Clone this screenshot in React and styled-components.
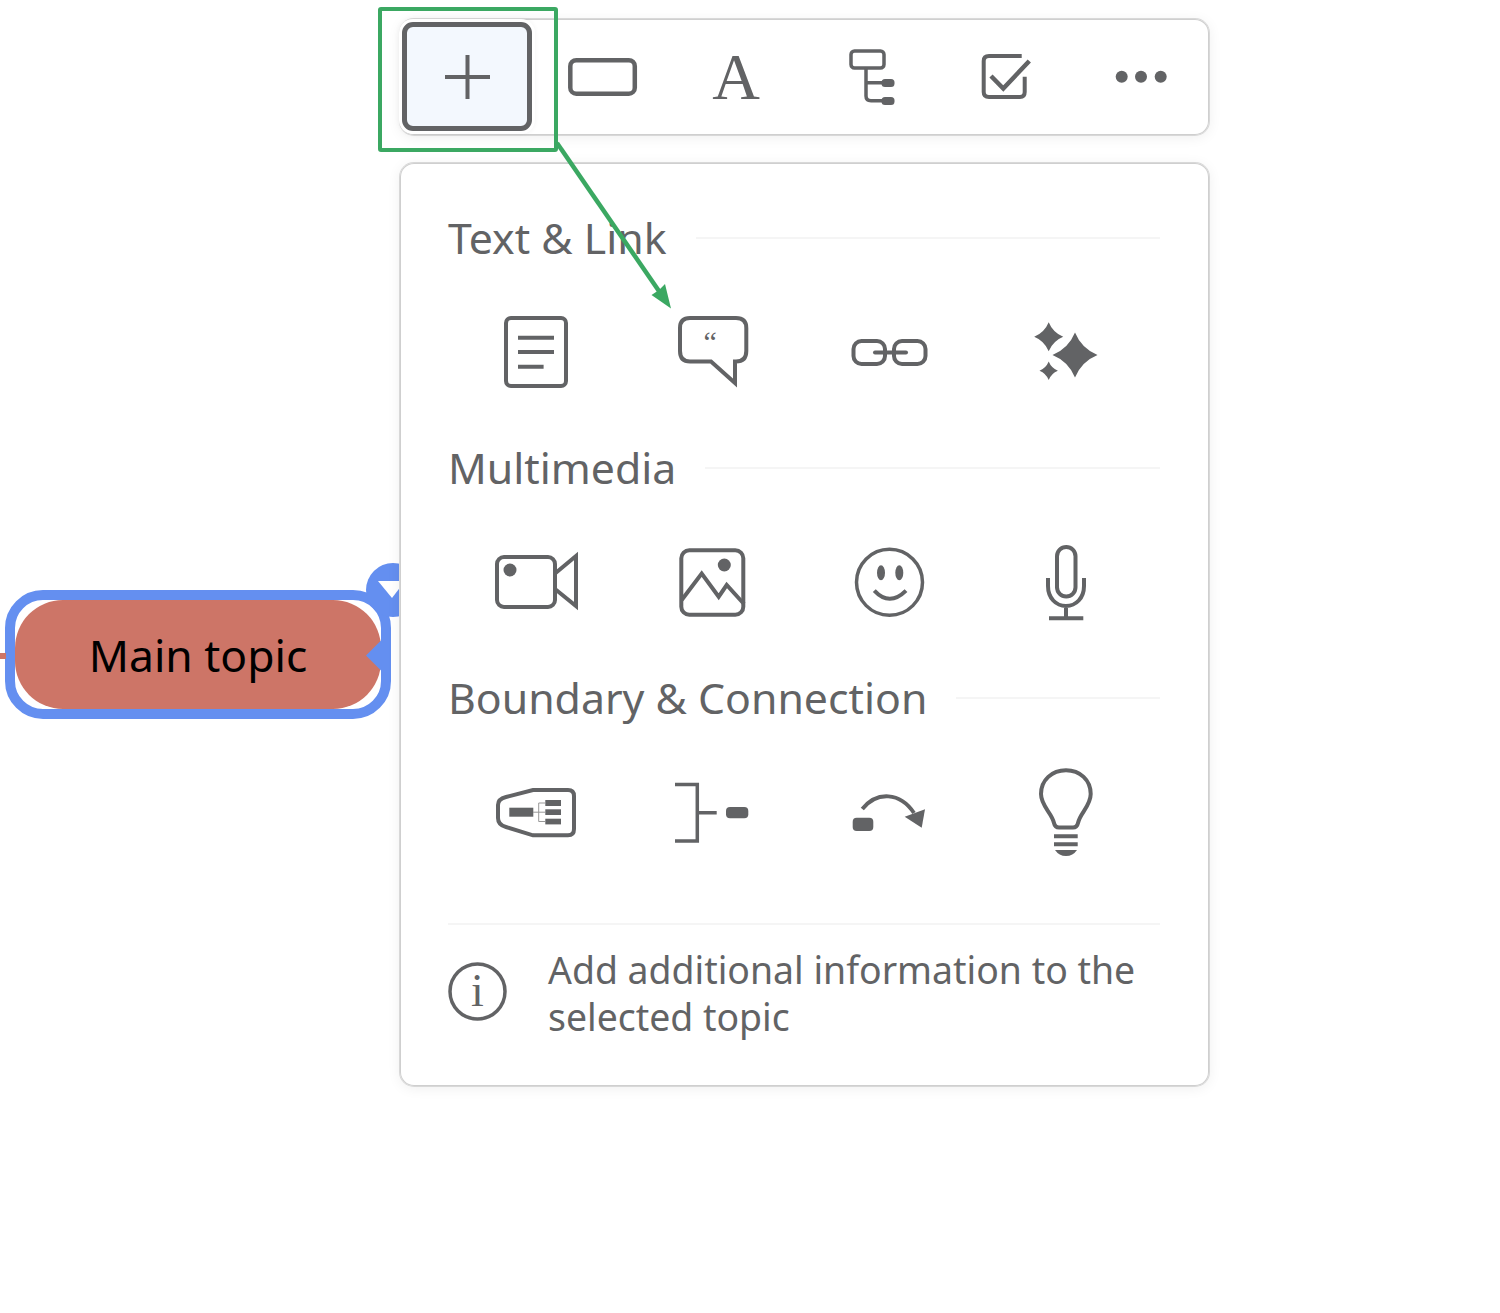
import React from "react";
import styled, { createGlobalStyle } from "styled-components";

const INK = "#626365";
const BLUE = "#648ff0";
const GREEN = "#3ba862";
const TOPIC = "#cd7567";

const GlobalStyle = createGlobalStyle`
  html, body {
    margin: 0;
    padding: 0;
    background: #fff;
  }
  body {
    font-family: "Noto Sans", "Open Sans", sans-serif;
    color: ${INK};
  }
`;

const Page = styled.div`
  position: relative;
  display: flex;
  width: 1500px;
  height: 1313px;
  padding-top: 19px;
  box-sizing: border-box;
  overflow: hidden;
`;

const CanvasSide = styled.div`
  width: 400px;
  padding: 571px 0 0 5px;
  box-sizing: border-box;
`;

const Topic = styled.div`
  position: relative;
  width: 386px;
  height: 129px;
  box-sizing: border-box;
  border: 10px solid ${BLUE};
  border-radius: 38px;
  background: #fff;
`;

const TopicFill = styled.div`
  display: flex;
  align-items: center;
  justify-content: center;
  height: 100%;
  border-radius: 48px;
  background: ${TOPIC};
  color: #000;
  font-size: 44.4px;
`;

const Connector = styled.span`
  position: absolute;
  left: -15px;
  top: 53px;
  width: 6px;
  height: 6px;
  background: ${TOPIC};
`;

const Handle = styled.svg`
  position: absolute;
  left: -15px;
  top: -38px;
  width: 400px;
  height: 120px;
  overflow: visible;
`;

const Panels = styled.div`
  position: relative;
  z-index: 1;
  display: flex;
  flex-direction: column;
  gap: 28px;
  width: 809px;
`;

const Toolbar = styled.div`
  display: flex;
  height: 116px;
  border-radius: 14px;
  background: #fff;
  box-shadow: inset 0 0 0 1px #cfcfcf, 0 0 0 1px #d8d8d8, 0 2px 14px rgba(0, 0, 0, 0.07);
`;

const ToolCell = styled.div`
  display: flex;
  flex: 0 0 135px;
  align-items: center;
  justify-content: center;
`;

const ActiveTool = styled(ToolCell)`
  width: 130px;
  flex: 0 0 130px;
  align-self: flex-start;
  height: 109px;
  margin: 3px 3px 0 2px;
  box-sizing: border-box;
  border: 5px solid ${INK};
  border-radius: 11px;
  background: #f3f8fe;
  box-shadow: 0 0 0 3px #fff, 0 0 5px 3px rgba(0, 0, 0, 0.05);
`;

const LetterTool = styled.span`
  padding-right: 3px;
  font-family: "Liberation Serif", serif;
  font-size: 66px;
  line-height: 1;
  color: ${INK};
`;

const Popup = styled.section`
  height: 923px;
  box-sizing: border-box;
  padding: 46px 49px 0 48px;
  border-radius: 14px;
  background: #fff;
  box-shadow: inset 0 0 0 1px #cfcfcf, 0 0 0 1px #d8d8d8, 0 2px 14px rgba(0, 0, 0, 0.07);
`;

const Section = styled.div`
  margin-bottom: 37px;
`;

const Heading = styled.div`
  display: flex;
  align-items: center;
  gap: 29px;
  height: 60px;
  margin-bottom: 33px;
`;

const HeadingText = styled.h3`
  margin: -2px 0 0;
  font-size: 42.8px;
  font-weight: 400;
  line-height: 60px;
  white-space: nowrap;
  color: ${INK};
`;

const Rule = styled.div`
  flex: 1;
  height: 2px;
  margin-top: -3px;
  background: #f5f5f5;
`;

const IconRow = styled.div`
  display: grid;
  grid-template-columns: repeat(4, 176px);
  column-gap: 1px;
  justify-items: center;
`;

const Icon = styled.svg`
  display: block;
  width: 100px;
  height: 100px;
  fill: none;
  stroke: ${INK};
  stroke-width: 4;
  overflow: visible;

  .solid {
    fill: ${INK};
    stroke: none;
  }
  text {
    fill: ${INK};
    stroke: none;
    font-family: "Liberation Serif", serif;
  }
`;

const Footer = styled.div`
  display: flex;
  gap: 41px;
  margin: 61px 0 0;
  padding-top: 21px;
  border-top: 2px solid #f5f5f5;
`;

const InfoIcon = styled.svg`
  flex: 0 0 59px;
  width: 59px;
  height: 59px;
  margin-top: 16px;
  fill: none;
  stroke: ${INK};
  stroke-width: 3.5;

  text {
    fill: ${INK};
    stroke: none;
    font-family: "Liberation Serif", serif;
    font-size: 46px;
  }
`;

const Hint = styled.p`
  margin: 0;
  font-size: 37.4px;
  line-height: 47px;
  color: ${INK};
`;

const Highlight = styled.div`
  position: absolute;
  z-index: 2;
  left: 378px;
  top: 7px;
  width: 180px;
  height: 145px;
  box-sizing: border-box;
  border: 4px solid ${GREEN};
  border-radius: 3px;
`;

const Arrow = styled.svg`
  position: absolute;
  z-index: 2;
  left: 0;
  top: 0;
  width: 1500px;
  height: 1313px;
  pointer-events: none;
`;

const star = (cx, cy, r) => {
  const k = r * 0.29;
  return `M${cx} ${cy - r}Q${cx + k} ${cy - k} ${cx + r} ${cy}Q${cx + k} ${cy + k} ${cx} ${cy + r}Q${cx - k} ${cy + k} ${cx - r} ${cy}Q${cx - k} ${cy - k} ${cx} ${cy - r}Z`;
};

// icons are drawn in page coordinates, the viewBox is centred on the cell
const Glyph = ({ cx, cy, children }) => (
  <Icon viewBox={`${cx - 50} ${cy - 50} 100 100`}>{children}</Icon>
);

const toolX = (i) => 468 + 135 * i;
const gridX = (i) => 536 + 177 * i;

const App = () => {
  return (
    <Page>
      <GlobalStyle />
      <CanvasSide>
        <Topic>
          <Connector />
          <TopicFill>Main topic</TopicFill>
          <Handle viewBox="0 562 400 120">
            <path fill={BLUE} d="M366 655.5L382 639.5V671.5Z" />
            <circle cx="393" cy="590" r="27" fill={BLUE} />
            <path fill="#fff" d="M378 581H405L392 598Z" />
          </Handle>
        </Topic>
      </CanvasSide>

      <Panels>
        <Toolbar>
          <ActiveTool>
            <Glyph cx={467} cy={77}>
              <path d="M445 77H490M467.5 55V99" />
            </Glyph>
          </ActiveTool>
          <ToolCell>
            <Glyph cx={toolX(1)} cy={77}>
              <rect x="570.3" y="60.2" width="64.5" height="33.5" rx="6" strokeWidth="4.5" />
            </Glyph>
          </ToolCell>
          <ToolCell>
            <LetterTool>A</LetterTool>
          </ToolCell>
          <ToolCell>
            <Glyph cx={toolX(3)} cy={77}>
              <rect x="851" y="51" width="33" height="17" rx="3.5" strokeWidth="3.5" />
              <path strokeWidth="3.5" d="M866 68V96Q866 100.7 871 100.7H884M866 82.7H884" />
              <rect className="solid" x="881.5" y="79" width="13" height="8" rx="3.5" />
              <rect className="solid" x="881.5" y="97" width="13" height="8" rx="3.5" />
            </Glyph>
          </ToolCell>
          <ToolCell>
            <Glyph cx={toolX(4)} cy={77}>
              <path d="M1021.7 56H989Q983.7 56 983.7 61V92Q983.7 97 989 97H1020Q1024.7 97 1024.7 92V76.7" />
              <path strokeWidth="4.5" d="M991 76L1003.3 88.5L1029.3 61" />
            </Glyph>
          </ToolCell>
          <ToolCell>
            <Glyph cx={toolX(5)} cy={77}>
              <circle className="solid" cx="1121.7" cy="76.7" r="6" />
              <circle className="solid" cx="1141" cy="76.7" r="6" />
              <circle className="solid" cx="1160.7" cy="76.7" r="6" />
            </Glyph>
          </ToolCell>
        </Toolbar>

        <Popup>
          <Section>
            <Heading>
              <HeadingText>Text &amp; Link</HeadingText>
              <Rule />
            </Heading>
            <IconRow>
              <Glyph cx={gridX(0)} cy={352}>
                <rect x="506" y="318" width="60" height="68" rx="5" />
                <path d="M518 337.7H554M518 352H554M518 366.7H543.6" />
              </Glyph>
              <Glyph cx={gridX(1)} cy={352}>
                <path d="M690 318H736Q746.3 318 746.3 328V351Q746.3 361.5 736 361.5H735V383L711 361.5H690Q680 361.5 680 351V328Q680 318 690 318Z" />
                <text x="703.5" y="352" fontSize="30">“</text>
              </Glyph>
              <Glyph cx={gridX(2)} cy={352}>
                <rect x="853.5" y="341" width="31.5" height="23" rx="8" />
                <rect x="894" y="341" width="31.5" height="23" rx="8" />
                <path strokeLinecap="round" d="M875 352.5H906" />
              </Glyph>
              <Glyph cx={gridX(3)} cy={352}>
                <path className="solid" d={star(1075, 355, 22.5)} />
                <path className="solid" d={star(1048.7, 336.8, 14.5)} />
                <path className="solid" d={star(1048.7, 370.8, 9.2)} />
              </Glyph>
            </IconRow>
          </Section>

          <Section>
            <Heading>
              <HeadingText>Multimedia</HeadingText>
              <Rule />
            </Heading>
            <IconRow>
              <Glyph cx={gridX(0)} cy={582}>
                <rect x="497" y="557" width="58" height="50" rx="7" />
                <circle className="solid" cx="510" cy="570" r="6.5" />
                <path d="M555 573.5L576 556V606L555 589" />
              </Glyph>
              <Glyph cx={gridX(1)} cy={582}>
                <rect x="681.3" y="550.3" width="62" height="64.5" rx="8" />
                <circle className="solid" cx="724.3" cy="565" r="6.5" />
                <path d="M681.7 600L701.7 573.5L718.7 596.7L726.7 585L744 604" />
              </Glyph>
              <Glyph cx={gridX(2)} cy={582}>
                <circle cx="889.5" cy="582.3" r="33" strokeWidth="3.5" />
                <ellipse className="solid" cx="881" cy="572.7" rx="4" ry="7.5" />
                <ellipse className="solid" cx="899.3" cy="572.7" rx="4" ry="7.5" />
                <path d="M874.3 590.7Q889.5 607 906 590.7" />
              </Glyph>
              <Glyph cx={gridX(3)} cy={582}>
                <rect x="1057" y="547" width="18.5" height="49.5" rx="9.25" />
                <path d="M1048 578V586C1048 598 1056 606 1066 606C1076 606 1084 598 1084 586V578M1066 606V618M1049 618.3H1083.3" />
              </Glyph>
            </IconRow>
          </Section>

          <Section>
            <Heading>
              <HeadingText>Boundary &amp; Connection</HeadingText>
              <Rule />
            </Heading>
            <IconRow>
              <Glyph cx={gridX(0)} cy={812}>
                <path d="M506 797L533 790H568Q574 790 574 796V829Q574 835.3 568 835.3H533L506 827Q498 825 498 818V805Q498 799 506 797Z" />
                <rect className="solid" x="509.3" y="807.7" width="24" height="9" />
                <rect className="solid" x="545.3" y="800" width="15.7" height="6" />
                <rect className="solid" x="545.3" y="809.3" width="15.7" height="5.7" />
                <rect className="solid" x="545.3" y="818.7" width="15.7" height="5.7" />
                <path strokeWidth="1" stroke="#999" d="M533 812.2H545M538.7 803H545M538.7 803V821.5H545" />
              </Glyph>
              <Glyph cx={gridX(1)} cy={812}>
                <path strokeWidth="3.5" d="M675 784.5H697.3V841H675M699 812.7H716.7" />
                <rect className="solid" x="726" y="807" width="22.3" height="11.3" rx="4" />
              </Glyph>
              <Glyph cx={gridX(2)} cy={812}>
                <rect className="solid" x="852.7" y="817.7" width="20.6" height="13.3" rx="4" />
                <path d="M862.3 809C877 791 900 792 914 813" />
                <path className="solid" d="M904.7 816.7L925 809.3L921.7 827.7Z" />
              </Glyph>
              <Glyph cx={gridX(3)} cy={812}>
                <path d="M1059 827.5H1073Q1077 827.5 1078 823C1080 813 1090.7 806 1090.7 794C1090.7 780 1080 770.3 1066 770.3C1052 770.3 1041 780 1041 794C1041 806 1052 813 1054 823Q1055 827.5 1059 827.5Z" />
                <path d="M1054 836.3H1077.7M1054 844.3H1077.7" />
                <path className="solid" d="M1055 850H1077Q1073 856 1066 856Q1059 856 1055 850Z" />
              </Glyph>
            </IconRow>
          </Section>

          <Footer>
            <InfoIcon viewBox="0 0 59 59">
              <circle cx="29.5" cy="29.5" r="27.5" />
              <text x="29.5" y="43.5" textAnchor="middle">i</text>
            </InfoIcon>
            <Hint>
              Add additional information to the
              <br />
              selected topic
            </Hint>
          </Footer>
        </Popup>
      </Panels>

      <Highlight />
      <Arrow viewBox="0 0 1500 1313">
        <path fill="none" stroke={GREEN} strokeWidth="4.5" d="M557 143L661 294" />
        <path fill={GREEN} d="M671 308.5L651.5 295L659 290L665 284Z" />
      </Arrow>
    </Page>
  );
};

export default App;
